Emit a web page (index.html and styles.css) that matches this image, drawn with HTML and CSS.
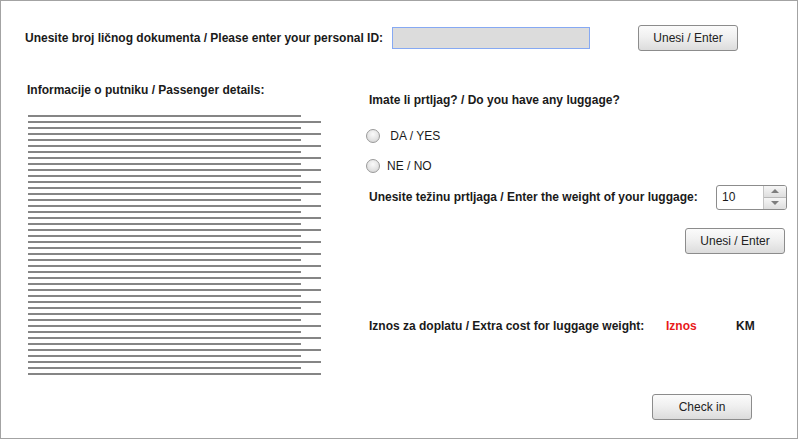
FILE: index.html
```html
<!DOCTYPE html>
<html>
<head>
<meta charset="utf-8">
<link rel="stylesheet" href="styles.css">
</head>
<body>
<div class="window">
  <div class="id-row">
    <span class="label id-label">Unesite broj ličnog dokumenta / Please enter your personal ID:</span>
    <div class="id-input"></div>
    <button class="btn btn-top">Unesi / Enter</button>
  </div>
  <div class="main">
    <div class="left">
      <div class="label">Informacije o putniku / Passenger details:</div>
      <div class="lines">
        <div class="line"></div><div class="line"></div><div class="line"></div><div class="line"></div>
        <div class="line"></div><div class="line"></div><div class="line"></div><div class="line"></div>
        <div class="line"></div><div class="line"></div><div class="line"></div><div class="line"></div>
        <div class="line"></div><div class="line"></div><div class="line"></div><div class="line"></div>
        <div class="line"></div><div class="line"></div><div class="line"></div><div class="line"></div>
        <div class="line"></div><div class="line"></div><div class="line"></div><div class="line"></div>
        <div class="line"></div><div class="line"></div><div class="line"></div><div class="line"></div>
        <div class="line"></div><div class="line"></div><div class="line"></div><div class="line"></div>
        <div class="line"></div><div class="line"></div><div class="line"></div><div class="line"></div>
        <div class="line"></div><div class="line"></div><div class="line"></div><div class="line"></div>
        <div class="line"></div><div class="line"></div><div class="line"></div><div class="line"></div>
      </div>
    </div>
    <div class="right">
      <div class="label q-label">Imate li prtljag? / Do you have any luggage?</div>
      <div class="radio-row row-yes"><span class="radio"></span><span class="opt">&nbsp;DA / YES</span></div>
      <div class="radio-row row-no"><span class="radio"></span><span class="opt">NE / NO</span></div>
      <div class="weight-row">
        <span class="label">Unesite težinu prtljaga / Enter the weight of your luggage:</span>
        <div class="spinner">
          <span class="spin-value">10</span>
          <div class="spin-btns">
            <span class="spin-up"><i class="arrow-up"></i></span>
            <span class="spin-down"><i class="arrow-down"></i></span>
          </div>
        </div>
      </div>
      <div class="btn-row"><button class="btn">Unesi / Enter</button></div>
      <div class="cost-row">
        <span class="label cost-label">Iznos za doplatu / Extra cost for luggage weight:</span>
        <span class="label amount">Iznos</span>
        <span class="label">KM</span>
      </div>
      <div class="check-row"><button class="btn">Check in</button></div>
    </div>
  </div>
</div>
</body>
</html>
```

FILE: styles.css
```css
html, body {
  margin: 0;
  padding: 0;
  background: #ffffff;
}
body {
  font-family: "Liberation Sans", Arial, sans-serif;
  font-size: 12px;
  color: #1a1a1a;
}
.window {
  box-sizing: border-box;
  width: 798px;
  height: 439px;
  border: 1px solid #a3a3a3;
  background: #ffffff;
}
.label {
  font-weight: bold;
  line-height: 14px;
  white-space: nowrap;
}
.id-row {
  display: flex;
  align-items: center;
  margin-top: 24px;
  padding-left: 24px;
  height: 25px;
}
.id-label {
  width: 367px;
}
.id-input {
  box-sizing: border-box;
  width: 198px;
  height: 22px;
  background: #dcdcdc;
  border: 1px solid #86a9f3;
}
.btn {
  box-sizing: border-box;
  width: 100px;
  height: 26px;
  padding: 0;
  border: 1px solid #8c8c8c;
  border-radius: 3px;
  background: linear-gradient(#fbfbfb, #f0f0f0 45%, #dcdcdc);
  font-family: "Liberation Sans", Arial, sans-serif;
  font-size: 12px;
  color: #222;
}
.btn-top {
  margin-left: 48px;
}
.main {
  display: flex;
  align-items: flex-start;
}
.left {
  box-sizing: border-box;
  width: 368px;
  padding-left: 26px;
  padding-top: 33px;
}
.lines {
  display: flex;
  flex-direction: column;
  gap: 4px;
  margin-top: 18px;
  margin-left: 1px;
}
.line {
  height: 2px;
  background: #858585;
  width: 273px;
}
.line:nth-child(even) {
  width: 293px;
}
.right {
  width: 418px;
  display: flex;
  flex-direction: column;
}
.q-label {
  margin-top: 43px;
}
.radio-row {
  display: flex;
  align-items: center;
  height: 16px;
  margin-left: -3px;
}
.row-yes {
  margin-top: 21px;
}
.row-no {
  margin-top: 14px;
}
.radio {
  box-sizing: border-box;
  width: 14px;
  height: 14px;
  border-radius: 50%;
  border: 1px solid #9a9a9a;
  background: radial-gradient(circle at 50% 35%, #fafafa, #e2e2e2 60%, #cfcfcf);
  margin-right: 7px;
}
.opt {
  line-height: 14px;
}
.weight-row {
  display: flex;
  align-items: center;
  justify-content: space-between;
  margin-top: 11px;
  height: 24px;
}
.spinner {
  box-sizing: border-box;
  width: 71px;
  height: 25px;
  border: 1px solid #8c8c8c;
  border-radius: 3px;
  display: flex;
  align-items: stretch;
  background: #fff;
  overflow: hidden;
}
.spin-value {
  flex: 1;
  padding-left: 5px;
  line-height: 22px;
  font-size: 12px;
}
.spin-btns {
  width: 22px;
  display: flex;
  flex-direction: column;
  border-left: 1px solid #c4c4c4;
}
.spin-up, .spin-down {
  flex: 1;
  display: flex;
  align-items: center;
  justify-content: center;
  background: linear-gradient(#f6f6f6, #dedede);
}
.spin-up {
  border-bottom: 1px solid #b8b8b8;
}
.arrow-up, .arrow-down {
  width: 0;
  height: 0;
  border-left: 4px solid transparent;
  border-right: 4px solid transparent;
}
.arrow-up {
  border-bottom: 4px solid #7d7d7d;
}
.arrow-down {
  border-top: 4px solid #7d7d7d;
}
.btn-row {
  display: flex;
  justify-content: flex-end;
  margin-top: 19px;
  padding-right: 2px;
}
.cost-row {
  display: flex;
  align-items: center;
  margin-top: 65px;
}
.cost-label {
  width: 297px;
}
.amount {
  width: 70px;
  color: #e81a1a;
}
.check-row {
  display: flex;
  margin-top: 61px;
  padding-left: 283px;
}
```
